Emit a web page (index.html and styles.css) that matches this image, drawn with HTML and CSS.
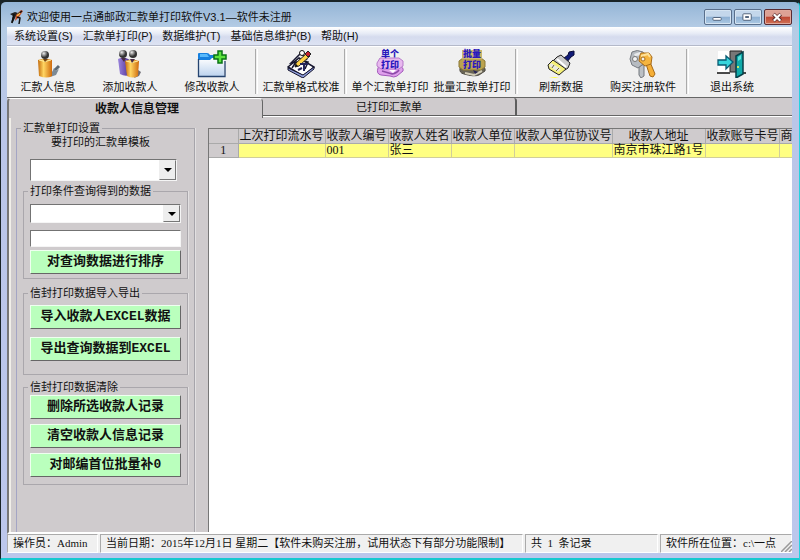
FILE: index.html
```html
<!DOCTYPE html>
<html lang="zh-CN">
<head>
<meta charset="utf-8">
<title>欢迎使用一点通邮政汇款单打印软件V3.1</title>
<link rel="stylesheet" href="styles.css">
</head>
<body>
<div class="window">
  <header class="titlebar">
    <svg class="app-icon" width="16" height="16" viewBox="0 0 16 16">
      <path d="M1 5l5-2 3 1-2 3-3 6-2 1 2-7z" fill="#222"/>
      <path d="M7 6l5-5 2 1-4 6-4 4z" fill="#c94a20"/>
      <path d="M5 5L3 14M8 8l3 1-1 6M9 5l4-3" stroke="#111" stroke-width="1.500" fill="none"/>
      <path d="M8 7l3-3" stroke="#f2c04e" stroke-width="1.300"/>
    </svg>
    <h1 class="title">欢迎使用一点通邮政汇款单打印软件V3.1—软件未注册</h1>
    <div class="window-buttons">
      <button class="win-btn" type="button" aria-label="最小化"><svg width="28" height="15" viewBox="0 0 28 15"><rect x="8.500" y="7.500" width="9" height="3" rx="1" fill="#fff" stroke="#4b5d75"/></svg></button>
      <button class="win-btn" type="button" aria-label="最大化"><svg width="28" height="15" viewBox="0 0 28 15"><rect x="8.500" y="3.500" width="9" height="7" rx="1" fill="#fff" stroke="#4b5d75"/><rect x="11.500" y="6.500" width="3" height="1" fill="#8fb0d2" stroke="#4b5d75"/></svg></button>
      <button class="win-btn win-close" type="button" aria-label="关闭"><svg width="28" height="15" viewBox="0 0 28 15"><path d="M9 4l8 7M17 4l-8 7" stroke="#5d2c2c" stroke-width="4"/><path d="M9.500 4l7 7M16.500 4l-7 7" stroke="#fff" stroke-width="2.400"/></svg></button>
    </div>
  </header>

  <div class="client">
    <nav class="menubar">
      <a href="#">系统设置(S)</a><a href="#">汇款单打印(P)</a><a href="#">数据维护(T)</a><a href="#">基础信息维护(B)</a><a href="#">帮助(H)</a>
    </nav>

    <div class="toolbar">
      <button class="tool" type="button">
        <svg width="28" height="28" viewBox="0 0 28 28">
          <defs>
            <linearGradient id="gold"><stop offset="0" stop-color="#c36a0b"/><stop offset=".4" stop-color="#ffd562"/><stop offset="1" stop-color="#cf6a0c"/></linearGradient>
            <radialGradient id="ball" cx=".35" cy=".3"><stop offset="0" stop-color="#eee"/><stop offset="1" stop-color="#333"/></radialGradient>
            <linearGradient id="violet"><stop offset="0" stop-color="#9b86dd"/><stop offset=".5" stop-color="#7459b9"/><stop offset="1" stop-color="#4b3489"/></linearGradient>
          </defs>
          <path d="M16 27l6-2 3-6-3 2-2-3-3 6z" fill="#7d8a96"/><path d="M21 20l4-4" stroke="#5c6974" stroke-width="3"/>
          <path d="M4 10q7-3 14 0v16q-5 3-13 0z" fill="url(#gold)"/><path d="M5 10q6 3 12 0" stroke="#fff0a0" fill="none"/>
          <path d="M9 9h5l-3 3z" fill="#73410f"/><circle cx="11" cy="5" r="4" fill="url(#ball)"/>
        </svg><span>汇款人信息</span>
      </button>
      <button class="tool" type="button">
        <svg width="28" height="28" viewBox="0 0 28 28">
          <path d="M18 28l5-2 2-4-3-2z" fill="#6f6e76"/>
          <path d="M2 9q6-3 12 1v15q-5 2-10-1z" fill="url(#violet)"/>
          <path d="M9 11q7-3 14 0l-1 15q-5 3-11 0z" fill="url(#gold)"/><path d="M10 11q6 3 12 0" stroke="#fff0a0" fill="none"/>
          <path d="M5 8h5l-2 4zM14 9h5l-3 4z" fill="#482b45"/>
          <circle cx="7" cy="4" r="4" fill="url(#ball)"/><circle cx="17" cy="4" r="4" fill="url(#ball)"/>
        </svg><span>添加收款人</span>
      </button>
      <button class="tool" type="button">
        <svg width="30" height="28" viewBox="0 0 30 28">
          <defs><linearGradient id="folder" x2="0" y2="1"><stop offset="0" stop-color="#fff"/><stop offset="1" stop-color="#bdd3ee"/></linearGradient></defs>
          <path d="M1 26V4q0-1 1-1h8q2 0 3 2h13v21z" fill="#1680df"/><path d="M3 4h7l2 3H3z" fill="#58b9fb"/>
          <path d="M2 10h11l2-2h12v18H2z" fill="url(#folder)"/><path d="M1.500 9v17.500h26.500V11" fill="none" stroke="#25436f" stroke-width="1.300"/>
          <path d="M21 1h4v4h4v4h-4v4h-4V9h-4V5h4z" fill="#5ce33d" stroke="#087315" stroke-width="1.500"/>
        </svg><span>修改收款人</span>
      </button>
      <span class="separator"></span>
      <button class="tool" type="button">
        <svg width="28" height="28" viewBox="0 0 28 28">
          <path d="M1 17L12 8l15 9-11 9z" fill="#fff" stroke="#15152e" stroke-width="1.500"/><path d="M1 18v2l15 8 11-9v-2l-11 8z" fill="#8d9bd8" stroke="#15152e"/>
          <path d="M13 4L4 13l5-1-4 6M16 11l5 1-3 7M15 4l5 6" stroke="#15152e" stroke-width="1.500" fill="none"/>
          <circle cx="15" cy="3" r="2.500" fill="#fff" stroke="#111"/>
          <path d="M8 17l1-4L20 3l3 3-11 10z" fill="#ffd348" stroke="#222"/><path d="M18 4l3-3 3 3-3 3z" fill="#c6202e" stroke="#222"/><path d="M8 17l1-3 2 2z" fill="#111"/>
          <path d="M13 14h8M17 14v7M11 20l4-2" fill="none" stroke="#252559" stroke-width="2"/>
        </svg><span>汇款单格式校准</span>
      </button>
      <span class="separator"></span>
      <button class="tool" type="button">
        <svg width="28" height="30" viewBox="0 0 28 30">
          <path d="M2 20q1-4 7-4l14 2q5 1 4 5l-6 5q-3 2-7 0l-9-1q-5-1-3-7z" fill="#dfa0ec" stroke="#a25aba"/>
          <path d="M1 15l3-5h19l4 3v5l-4 3H5l-4-3z" fill="#e8b9ef" stroke="#b77aca"/>
          <path d="M6 23l10 3q5-1 7-4" stroke="#8c4ca8" fill="none" stroke-width="1.500"/><path d="M13 22h7l-3 3z" fill="#fff"/>
          <text class="icon-text" x="14" y="9" text-anchor="middle">单个</text><text class="icon-text" x="14" y="20" text-anchor="middle">打印</text>
        </svg><span>单个汇款单打印</span>
      </button>
      <button class="tool" type="button">
        <svg width="28" height="30" viewBox="0 0 28 30">
          <path d="M2 20q2-4 7-4l14 2q5 1 4 5l-6 4q-5 2-15-1-5-1-4-6z" fill="#686455" stroke="#4e4b43"/>
          <path d="M1 13l4-3h18l4 3v6l-4 3H5l-4-3z" fill="#bba34e" stroke="#8b7937"/><path d="M4 2h20v9H4z" fill="#cbb66c"/>
          <path d="M7 25l9 2 8-4" stroke="#d3cdb6" fill="none" stroke-width="2"/><path d="M15 22l5 2-3 2z" fill="#292656"/>
          <text class="icon-text" x="14" y="9" text-anchor="middle">批量</text><text class="icon-text" x="14" y="20" text-anchor="middle">打印</text>
        </svg><span>批量汇款单打印</span>
      </button>
      <span class="separator"></span>
      <button class="tool" type="button">
        <svg width="28" height="28" viewBox="0 0 28 28">
          <path d="M2 27h10l-4 1z" fill="#ff4"/><path d="M17 8l4-3 1-3 5-1v4l-3 2-4 5z" fill="#111b78" stroke="#080c38"/>
          <path d="M10 7l4-2 9 8-2 5-3 2L6 11z" fill="#ccc" stroke="#222"/>
          <path d="M6 10L1 15l1 4 10 6 7-6z" fill="#f5f078" stroke="#222"/><path d="M4 13l-2 3 9 6 3-3z" fill="#e8e8e0"/><path d="M5 18l2-3M9 21l3-3" stroke="#6c6739"/><path d="M10 9l9 8" stroke="#fff" stroke-width="2"/>
        </svg><span>刷新数据</span>
      </button>
      <button class="tool" type="button">
        <svg width="28" height="28" viewBox="0 0 28 28">
          <path d="M10 17l5-3v12l-3 2-2-3z" fill="#bbc0c5" stroke="#72777d"/><path d="M3 2q5-3 11 0l3 5-3 7-5 4-6-3-2-6z" fill="#b6bbc1" stroke="#777b82"/><path d="M5 4l6-2 4 3-9 1z" fill="#e8eaec"/><circle cx="6" cy="9" r="2.500" fill="#f4f4f4" stroke="#777"/>
          <path d="M17 14l4-2 5 12-2 3-3-1z" fill="#f5ae36" stroke="#a56917"/><path d="M12 3h8l3 4-1 7-6 2-6-5 1-6z" fill="#f5b43e" stroke="#a96c19"/><path d="M12 6l7-2 2 3" stroke="#ffe29a" stroke-width="2" fill="none"/><circle cx="14" cy="9" r="2" fill="#f3f1ec" stroke="#a66b18"/>
        </svg><span>购买注册软件</span>
      </button>
      <span class="separator"></span>
      <button class="tool" type="button">
        <svg width="30" height="28" viewBox="0 0 30 28">
          <path d="M1 1h13v22H1z" fill="#fff"/><path d="M13 1h12v21H13z" fill="#777" stroke="#222"/><path d="M0 23h13M24 23h5" stroke="#111" stroke-width="1.500"/>
          <path d="M19 6l7-4v22l-7 4z" fill="#10aaa9" stroke="#063f48" stroke-width="1.500"/><path d="M21 7l3-2v4l-3 2z" fill="#5ee1db"/><circle cx="21" cy="17" r="1" fill="#ff5"/>
          <path d="M1 10h8V6l7 6-7 7v-4H1z" fill="#35d5dc" stroke="#075a72" stroke-width="1.300"/>
        </svg><span>退出系统</span>
      </button>
    </div>

    <div class="tabs" role="tablist">
      <button class="tab active" type="button" role="tab" aria-selected="true">收款人信息管理</button>
      <button class="tab" type="button" role="tab" aria-selected="false">已打印汇款单</button>
      <span class="tab-fill"></span>
    </div>

    <main class="content">
      <form class="sidebar">
        <fieldset class="settings">
          <legend>汇款单打印设置</legend>
          <label class="template-label" for="template">要打印的汇款单模板</label>
          <div class="combo template"><select id="template"><option></option></select></div>
          <fieldset class="group query">
            <legend>打印条件查询得到的数据</legend>
            <div class="combo"><select aria-label="查询条件"><option></option></select></div>
            <input class="textbox" type="text" aria-label="查询内容">
            <button class="action" type="button">对查询数据进行排序</button>
          </fieldset>
          <fieldset class="group transfer">
            <legend>信封打印数据导入导出</legend>
            <button class="action" type="button">导入收款人EXCEL数据</button>
            <button class="action" type="button">导出查询数据到EXCEL</button>
          </fieldset>
          <fieldset class="group clear">
            <legend>信封打印数据清除</legend>
            <button class="action" type="button">删除所选收款人记录</button>
            <button class="action" type="button">清空收款人信息记录</button>
            <button class="action" type="button">对邮编首位批量补0</button>
          </fieldset>
        </fieldset>
      </form>
      <div class="grid-view">
        <table>
          <colgroup><col class="c-index"><col class="c-serial"><col class="c-short"><col class="c-short"><col class="c-short"><col class="c-protocol"><col class="c-address"><col class="c-account"><col class="c-short"></colgroup>
          <thead><tr><th></th><th>上次打印流水号</th><th>收款人编号</th><th>收款人姓名</th><th>收款人单位</th><th>收款人单位协议号</th><th>收款人地址</th><th>收款账号卡号</th><th class="left">商</th></tr></thead>
          <tbody><tr><th>1</th><td></td><td>001</td><td>张三</td><td></td><td></td><td>南京市珠江路1号</td><td></td><td></td></tr></tbody>
        </table>
      </div>
    </main>

    <footer class="statusbar">
      <span class="status operator">操作员：Admin</span>
      <span class="status date">当前日期：2015年12月1日 星期二【软件未购买注册，试用状态下有部分功能限制】</span>
      <span class="status count">共&nbsp; 1&nbsp; 条记录</span>
      <span class="status path">软件所在位置：c:\一点</span>
      <svg class="grip" width="11" height="11" viewBox="0 0 11 11"><path d="M0 11L11 0M4 11l7-7M8 11l3-3" stroke="#999" stroke-width="1.500"/></svg>
    </footer>
  </div>
</div>
</body>
</html>
```
FILE: styles.css
```css
* { box-sizing: border-box; }

body {
  margin: 0;
  font: 11px/14px "Liberation Sans", "Noto Sans CJK SC", sans-serif;
  color: #111;
  background: #182326;
}

button, input, select { font: inherit; color: inherit; }
button { padding: 0; border: 0; background: none; }

.window {
  display: flex;
  flex-direction: column;
  height: 100vh;
  padding: 0 7px 5px 6px;
  border: 1px solid #182326;
  border-top-width: 2px;
  border-right-color: #24d2df;
  border-bottom: 2px solid #18c9d0;
  border-radius: 6px 6px 0 0;
  background: linear-gradient(#94b5d6 0, #b5cce5 26px, #bac6e8 120px, #bcc7ec 100%);
}

.titlebar {
  display: flex;
  align-items: center;
  flex: 0 0 25px;
  padding: 4px 0 0 2px;
}
.app-icon { flex: none; }
.title {
  flex: 1;
  margin: 0 0 0 2px;
  font-size: 11px;
  font-weight: 400;
  line-height: 16px;
  white-space: nowrap;
}
.window-buttons { display: flex; gap: 2px; }
.win-btn {
  display: flex;
  width: 28px;
  height: 16px;
  border: 1px solid #596f8c;
  border-radius: 2px;
  background: linear-gradient(#c4d7eb 45%, #8eb0d3 50%, #adcae4);
  box-shadow: inset 0 0 0 1px #d5e4f2;
  overflow: hidden;
}
.win-close {
  border-color: #592b32;
  background: linear-gradient(#dda195 45%, #bd4633 50%, #d27356);
  box-shadow: inset 0 0 0 1px #e0a89c;
}

.client {
  display: flex;
  flex-direction: column;
  flex: 1;
  min-height: 0;
  background: #f0f0f0;
}

.menubar {
  display: flex;
  flex: 0 0 19px;
  gap: 10px;
  padding: 2px 7px 0;
  border-bottom: 1px solid #b4b9c9;
  background: linear-gradient(#fff, #e8ecf6 35%, #d5dbee 55%, #dde3f3);
}
.menubar a { color: inherit; text-decoration: none; white-space: nowrap; }

.toolbar {
  display: flex;
  flex: 0 0 51px;
  border-top: 1px solid #fff;
}
.tool {
  display: flex;
  flex-direction: column;
  align-items: center;
  justify-content: flex-end;
  width: 82px;
  padding-bottom: 3px;
}
.tool span { margin-top: 2px; line-height: 14px; white-space: nowrap; }
.separator {
  width: 3px;
  margin: 2px 2px 3px;
  border-left: 1px solid #aaa;
  border-right: 1px solid #fff;
}
.icon-text {
  font: 900 9px "Liberation Sans", "Noto Sans CJK SC", sans-serif;
  fill: #2a18bd;
}

.tabs {
  display: flex;
  flex: 0 0 21px;
  border-top: 1px solid #666;
  background: #cfcbcd;
}
.tab {
  width: 254px;
  height: 18px;
  padding-top: 1px;
  border: solid #5e5e5e;
  border-width: 0 2px 1px 0;
  border-radius: 0 3px 0 0;
  line-height: 16px;
}
.tab.active {
  width: 256px;
  height: 20px;
  padding-left: 3px;
  border-width: 1px 1px 0 2px;
  border-color: #fff #666 #fff #777;
  border-radius: 4px 4px 0 0;
  font-size: 12px;
  font-weight: 700;
}
.tab-fill { flex: 1; height: 18px; border-bottom: 1px solid #666; }
.tab:not(.active), .tab-fill { box-shadow: 0 1px #fff; }

.content {
  display: flex;
  flex: 1;
  min-height: 0;
  border-left: 2px solid #777;
  border-bottom: 2px solid #fff;
  background: #cfcbcd;
  overflow: hidden;
}
.sidebar {
  flex: 0 0 199px;
  padding: 4px 13px 0 5px;
  border-left: 2px solid #f1efe9;
}
fieldset {
  min-width: 0;
  margin: 0;
  border: 1px solid #a6a4aa;
  box-shadow: 1px 0 #e2e0e1;
}
legend { padding: 0 2px; line-height: 12px; white-space: nowrap; }
.settings {
  height: 100%;
  padding: 0 6px;
  border-bottom: 0;
  border-left-color: #a4a5c4;
}
.settings > legend { margin-left: -2px; }
.template-label { display: block; padding-right: 10px; line-height: 16px; text-align: center; }
.combo { position: relative; height: 19px; }
.combo select, .textbox {
  display: block;
  width: 100%;
  height: 100%;
  padding: 0 2px;
  border: 1px solid;
  border-color: #737373 #f5f5f5 #f5f5f5 #737373;
  border-radius: 0;
  background: #fff;
  appearance: none;
}
.combo::before {
  content: "";
  position: absolute;
  z-index: 1;
  top: 1px;
  right: 1px;
  bottom: 1px;
  width: 15px;
  border: 1px solid;
  border-color: #eee #777 #777 #eee;
  background: #eee;
  pointer-events: none;
}
.combo::after {
  content: "";
  position: absolute;
  z-index: 1;
  top: 50%;
  right: 5px;
  margin-top: -2px;
  border: 4px solid transparent;
  border-top-color: #000;
  border-bottom: 0;
  pointer-events: none;
}
.combo.template { height: 22px; margin: 9px 11px 4px 7px; }

.group {
  display: flex;
  flex-direction: column;
  padding: 0 6px;
  border-color: #aaa7ac;
}
.group legend { margin-left: -2px; }
.query { gap: 7px; padding-top: 7px; padding-bottom: 4px; }
.query .action { margin-top: -4px; }
.textbox { height: 17px; }
.transfer { gap: 8px; margin-top: 8px; padding-top: 6px; padding-bottom: 13px; }
.clear { gap: 5px; margin-top: 6px; padding-top: 2px; padding-bottom: 7px; }
.action {
  height: 24px;
  border: 1px solid;
  border-color: #effff0 #666 #666 #effff0;
  background: #baffbd;
  font: 700 13px/20px "Liberation Mono", "Noto Sans CJK SC", monospace;
  white-space: nowrap;
}

.grid-view {
  flex: 1;
  min-width: 0;
  margin-top: 10px;
  border: solid #777;
  border-width: 1px 0 0 1px;
  background: #fff;
  overflow: hidden;
}
table {
  width: 633px;
  border-collapse: collapse;
  table-layout: fixed;
  font: 12px/13px "Liberation Serif", "Noto Sans CJK SC", serif;
}
.c-index { width: 29px; }
.c-serial { width: 87px; }
.c-short { width: 63px; }
.c-protocol { width: 98px; }
.c-address { width: 93px; }
.c-account { width: 74px; }
th, td {
  height: 14px;
  padding: 0 1px;
  border: solid #aaa;
  border-width: 0 1px 1px 0;
  font-weight: 400;
  line-height: 13px;
  white-space: nowrap;
}
thead th { padding-top: 1px; }
th { background: #cfcbcd; }
td { background: #ffff82; border-color: #d1ce9a; }
.left { text-align: left; }

.statusbar {
  position: relative;
  display: flex;
  flex: 0 0 19px;
  gap: 2px;
  font-family: "Liberation Serif", "Noto Sans CJK SC", serif;
}
.status {
  padding: 1px 0 0 5px;
  border: 1px solid;
  border-color: #aaa #fff #fff #aaa;
  line-height: 15px;
  white-space: nowrap;
  overflow: hidden;
}
.operator { flex: 0 0 91px; }
.date { flex: 0 0 423px; }
.count { flex: 0 0 133px; }
.path { flex: 1; }
.grip { position: absolute; right: 0; bottom: 1px; }
```
